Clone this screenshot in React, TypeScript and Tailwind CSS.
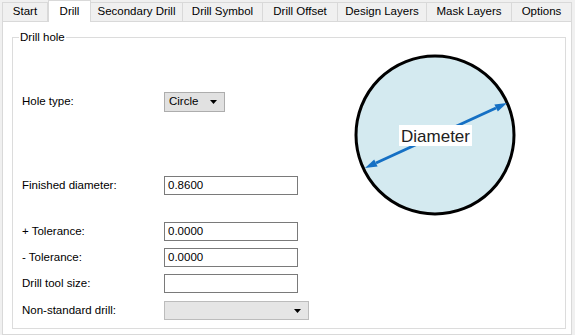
import React from "react";

const tabs = [
  { label: "Start", w: "w-[46px]" },
  { label: "Drill", w: "w-[43px]", active: true },
  { label: "Secondary Drill", w: "w-[92px]" },
  { label: "Drill Symbol", w: "w-[80px]" },
  { label: "Drill Offset", w: "w-[75px]" },
  { label: "Design Layers", w: "w-[89px]" },
  { label: "Mask Layers", w: "w-[85px]" },
  { label: "Options", w: "w-[60px]" },
];

function Caret() {
  return (
    <svg width="7" height="4" viewBox="0 0 7 4">
      <polygon points="0,0 7,0 3.5,4" fill="#000" />
    </svg>
  );
}

function Field({
  label,
  children,
  className = "",
}: {
  label: string;
  children: React.ReactNode;
  className?: string;
}) {
  return (
    <div className={`flex items-center ${className}`}>
      <div className="w-[142px]">{label}</div>
      {children}
    </div>
  );
}

function TextBox({ value = "" }: { value?: string }) {
  return (
    <div className="w-[134px] h-[19px] border border-[#7a7a7a] bg-white flex items-center pl-[3px]">
      {value}
    </div>
  );
}

function DiameterDrawing() {
  return (
    <svg width="170" height="170" viewBox="0 0 170 170">
      <circle cx="85" cy="85" r="79" fill="#d4eaf0" stroke="#000" strokeWidth="3" />
      <line x1="26" y1="113" x2="146" y2="58" stroke="#1570c4" strokeWidth="3" />
      <polygon points="157,53 147.8,61.6 144.4,54.4" fill="#1570c4" />
      <polygon points="15,118 24.2,109.4 27.6,116.6" fill="#1570c4" />
      <rect x="49" y="75" width="73" height="21" fill="#fff" />
      <text
        x="85.5"
        y="92"
        textAnchor="middle"
        fontSize="17"
        fill="#222"
        fontFamily='"Liberation Sans", Arial, sans-serif'
      >
        Diameter
      </text>
    </svg>
  );
}

export default function App() {
  return (
    <div className="w-[575px] h-[335px] overflow-hidden bg-[#f0f0f0] text-[11.5px] text-black font-['Liberation_Sans',Arial,sans-serif]">
      {/* Tab strip */}
      <div className="flex items-end h-[21px] pl-[2px]">
        {tabs.map((t) =>
          t.active ? (
            <div
              key={t.label}
              className={`${t.w} h-[22px] -mb-px relative z-10 bg-white border border-b-0 border-[#d9d9d9] flex items-center justify-center`}
            >
              {t.label}
            </div>
          ) : (
            <div
              key={t.label}
              className={`${t.w} h-[19px] bg-[#f0f0f0] border-t border-r border-[#d9d9d9] first:border-l flex items-center justify-center`}
            >
              {t.label}
            </div>
          ),
        )}
      </div>

      {/* Panel */}
      <div className="ml-[2px] w-[570px] h-[314px] bg-white border border-[#d9d9d9]">
        <fieldset className="ml-[9px] mt-[7px] w-[554px] h-[300px] border border-[#dcdcdc]">
          <legend className="ml-[6px] px-[1px] leading-[16px]">Drill hole</legend>
          <div className="flex">
            <div className="pl-[9px] flex flex-col w-[300px]">
              <Field label="Hole type:" className="mt-[47px]">
                <div className="w-[61px] h-[20px] bg-[#e1e1e1] border border-[#adadad] flex items-center justify-between pl-[4px] pr-[7px]">
                  <span>Circle</span>
                  <Caret />
                </div>
              </Field>
              <Field label="Finished diameter:" className="mt-[64px]">
                <TextBox value="0.8600" />
              </Field>
              <Field label="+ Tolerance:" className="mt-[27px]">
                <TextBox value="0.0000" />
              </Field>
              <Field label="- Tolerance:" className="mt-[7px]">
                <TextBox value="0.0000" />
              </Field>
              <Field label="Drill tool size:" className="mt-[7px]">
                <TextBox />
              </Field>
              <Field label="Non-standard drill:" className="mt-[8px]">
                <div className="w-[145px] h-[19px] bg-[#e5e5e5] border border-[#bcbcbc] flex items-center justify-end pr-[7px]">
                  <Caret />
                </div>
              </Field>
            </div>
            <div className="ml-[37px] mt-[5px]">
              <DiameterDrawing />
            </div>
          </div>
        </fieldset>
      </div>
    </div>
  );
}
